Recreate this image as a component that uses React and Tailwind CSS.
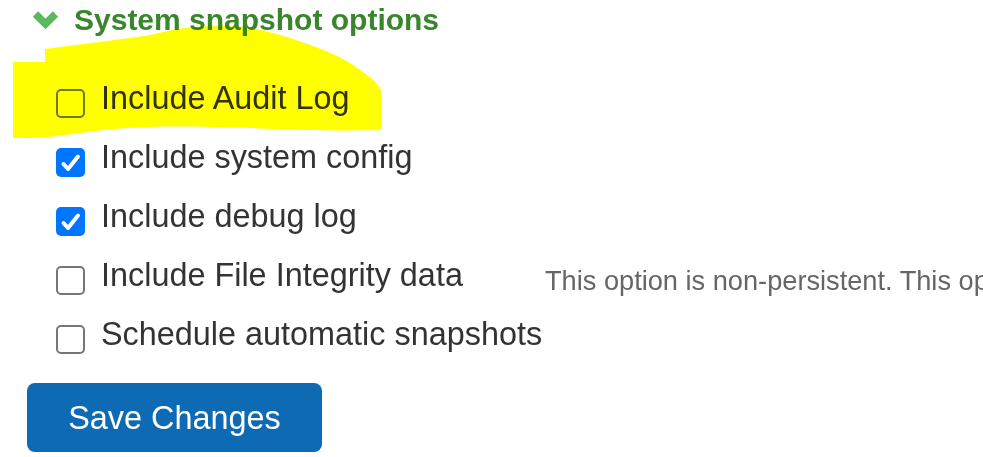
import React from 'react';

const options = [
  { label: 'Include Audit Log', checked: false },
  { label: 'Include system config', checked: true },
  { label: 'Include debug log', checked: true },
  { label: 'Include File Integrity data', checked: false, hint: 'This option is non-persistent. This option will be reset after the snapshot is taken.' },
  { label: 'Schedule automatic snapshots', checked: false },
];

function Checkbox({ checked }) {
  if (checked) {
    return (
      <span className="mt-[22px] flex h-[29px] w-[29px] shrink-0 items-center justify-center rounded-[5px] bg-[#0075ff]">
        <svg width="29" height="29" viewBox="0 0 29 29" fill="none">
          <path d="M7.5 16l4.5 5L22 8.5" stroke="#fff" strokeWidth="4" strokeLinecap="round" strokeLinejoin="round" />
        </svg>
      </span>
    );
  }
  return <span className="mt-[22px] block h-[29px] w-[29px] shrink-0 rounded-[5px] border-[2.5px] border-[#767676] bg-white" />;
}

export default function App() {
  return (
    <div className="relative h-[457px] w-[983px] overflow-hidden bg-white font-['Liberation_Sans',Arial,sans-serif]">
      {/* section header */}
      <div className="mt-[5px] flex h-[30px] items-center pl-[32px]">
        <svg width="27" height="21" viewBox="0 0 27 21" className="mt-[1px]">
          <path d="M3.5 4L13.5 14L23.5 4" fill="none" stroke="#5cb85c" strokeWidth="7.5" strokeLinejoin="miter" />
        </svg>
        <h3 className="ml-[15px] text-[30px] font-bold leading-[30px] text-[#3a862d] whitespace-nowrap">
          System snapshot options
        </h3>
      </div>

      <div className="mt-[32px] pl-[56px]">
        {options.map((o) => (
          <div key={o.label} className="flex h-[59px] items-start whitespace-nowrap">
            <Checkbox checked={o.checked} />
            <span className={`ml-[16px] mt-[13px] shrink-0 text-[32.4px] leading-[36px] text-[#333] ${o.hint ? 'w-[444px]' : ''}`}>
              {o.label}
            </span>
            {o.hint && (
              <span className="mt-[23px] shrink-0 text-[27.2px] leading-[27px] text-[#666]">{o.hint}</span>
            )}
          </div>
        ))}
      </div>

      <div className="mt-[21px] pl-[27px]">
        <button className="flex h-[69px] w-[295px] items-center justify-center rounded-[8px] bg-[#0f6ab4] text-[32.4px] leading-[36px] text-white">
          Save Changes
        </button>
      </div>

      {/* yellow highlighter scribble */}
      <svg className="pointer-events-none absolute left-0 top-0 mix-blend-multiply" width="983" height="457">
        <path
          d="M13,62 L45,62 L45,49 C80,44 120,40 150,35 C170,30 185,27 210,26 C245,25 265,30 290,38 C312,45 330,52 345,60 C355,66 362,71 367,75 C374,80 378,85 381,90 L381,130 C340,131 300,130 250,128 C215,127 180,126 150,127 C120,128 100,130 80,133 C60,136 40,138 25,138 L13,138 Z"
          fill="#ffff00"
        />
      </svg>
    </div>
  );
}
